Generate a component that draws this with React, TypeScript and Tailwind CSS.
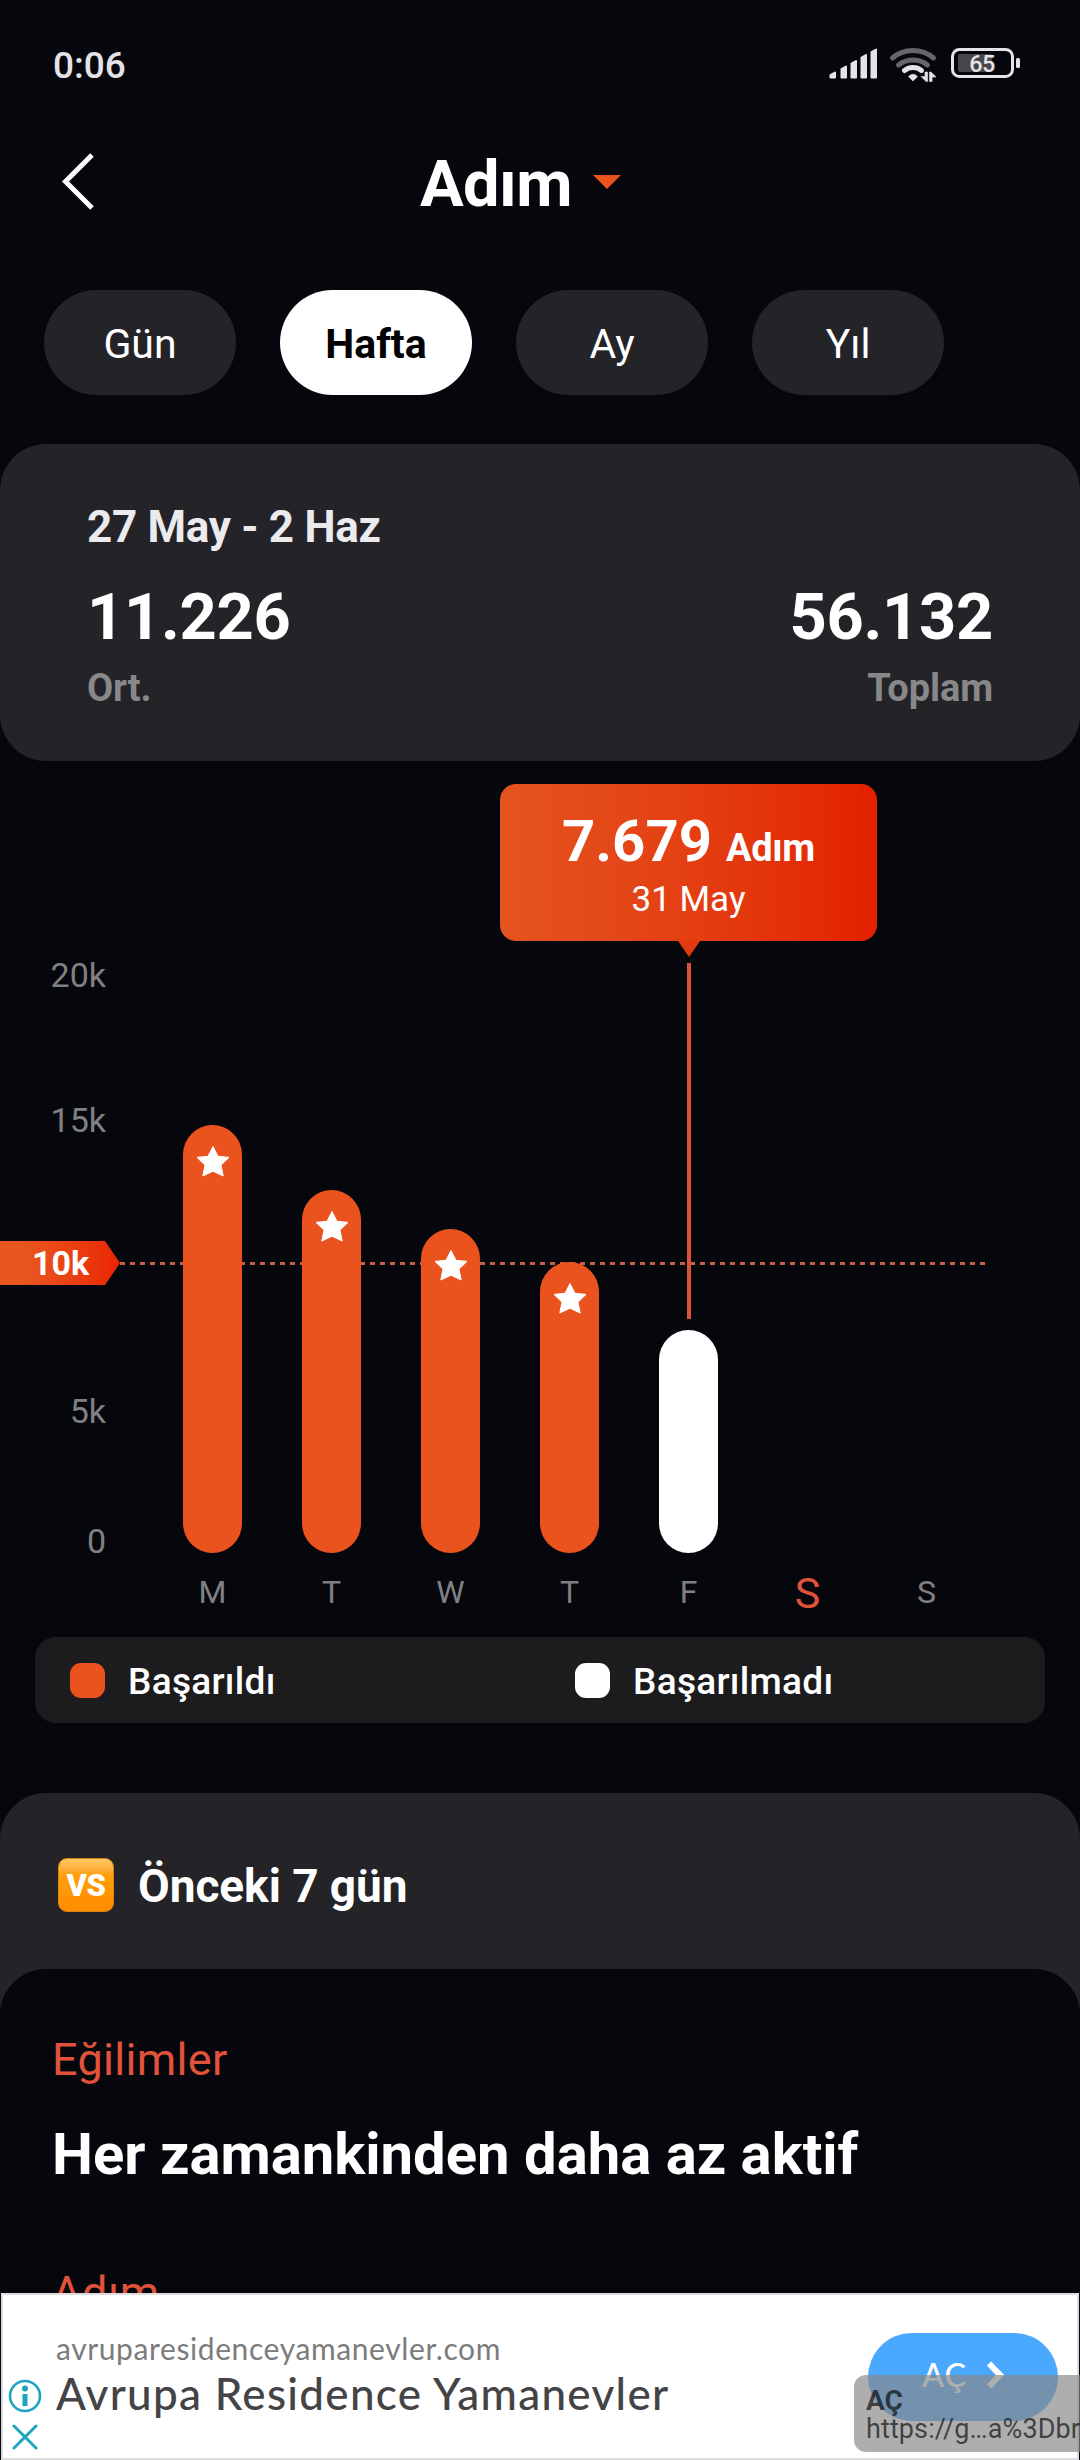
interface Day {
  label: string;
  height: number;
  reached?: boolean;
  today?: boolean;
}

const periods = ['Gün', 'Hafta', 'Ay', 'Yıl'];

const days: Day[] = [
  { label: 'M', height: 428, reached: true },
  { label: 'T', height: 363, reached: true },
  { label: 'W', height: 324, reached: true },
  { label: 'T', height: 291, reached: true },
  { label: 'F', height: 223 },
  { label: 'S', height: 0, today: true },
  { label: 'S', height: 0 },
];

export default function App() {
  return (
    <div className="flex h-[2460px] w-[1080px] flex-col overflow-hidden bg-[#06070c] font-['Roboto',sans-serif] text-white">
      <StatusBar />

      <header className="flex h-[102px] items-center">
        <svg width="40" height="60" viewBox="0 0 40 60" className="ml-[58px]" fill="none" stroke="white" strokeWidth="5">
          <path d="M34 4 7.500 30.500 34 57" />
        </svg>
        <h1 className="ml-[322px] pt-[5px] text-[65px] leading-[76px] font-bold tracking-[-0.6px]">Adım</h1>
        <svg width="28" height="14" viewBox="0 0 28 14" className="ml-[21px] mt-[2px]">
          <path d="M0 0h28L14 14z" fill="#ea531d" />
        </svg>
      </header>

      <nav className="mt-[58px] flex gap-[44px] pl-[44px]">
        {periods.map((p) => (
          <button
            key={p}
            className={
              p === 'Hafta'
                ? 'h-[105px] w-[192px] rounded-full bg-white pt-[5px] text-[41px] font-bold text-black'
                : 'h-[105px] w-[192px] rounded-full bg-[#242328] pt-[5px] text-[41px] text-white'
            }
          >
            {p}
          </button>
        ))}
      </nav>

      <section className="mt-[49px] h-[317px] rounded-[46px] bg-[#242328] px-[87px] pt-[57px]">
        <div className="text-[44px] leading-[52px] font-bold tracking-[-0.3px] text-[#ebebed]">27 May - 2 Haz</div>
        <div className="mt-[28px] flex justify-between">
          <Total value="11.226" label="Ort." />
          <Total value="56.132" label="Toplam" right />
        </div>
      </section>

      <Chart />

      <div className="mx-[35px] flex h-[86px] shrink-0 items-center rounded-[21px] bg-[#1c1c1e] pl-[35px]">
        <div className="flex w-[505px] items-center gap-[23px]">
          <span className="size-[35px] rounded-[11px] bg-[#ea531d]" />
          <span className="pt-[3px] text-[37px] leading-[44px] font-medium tracking-[0.3px]">Başarıldı</span>
        </div>
        <div className="flex items-center gap-[23px]">
          <span className="size-[35px] rounded-[11px] bg-white" />
          <span className="pt-[3px] text-[37px] leading-[44px] font-medium tracking-[0.3px]">Başarılmadı</span>
        </div>
      </div>

      <section className="mt-[70px] flex min-h-0 flex-1 flex-col rounded-t-[46px] bg-[#242328]">
        <div className="flex h-[176px] shrink-0 items-center gap-[24px] pt-[8px] pl-[58px]">
          <span className="flex h-[54px] w-[56px] items-center justify-center rounded-[9px] border border-[#d98310] bg-linear-to-b from-[#ffc865] via-[#ffa00a] via-30% to-[#ff8c00] text-[31px] leading-none font-black tracking-[-0.5px]">
            VS
          </span>
          <span className="pt-[2px] text-[46px] leading-[54px] font-bold tracking-[-0.05px]">Önceki 7 gün</span>
        </div>
        <div className="min-h-0 flex-1 overflow-hidden rounded-t-[46px] bg-[#06070c] px-[52px] pt-[64px]">
          <div className="text-[45px] leading-[54px] tracking-[0.3px] text-[#e1523a]">Eğilimler</div>
          <div className="mt-[32px] text-[58px] leading-[70px] font-bold">Her zamankinden daha az aktif</div>
          <div className="mt-[77px] text-[45px] leading-[54px] tracking-[0.6px] text-[#e1523a]">Adım</div>
        </div>
      </section>

      <AdBanner />
    </div>
  );
}

function StatusBar() {
  return (
    <div className="flex h-[130px] shrink-0 items-center pl-[53px] text-[#e4e4e8]">
      <span className="flex-1 pt-[2px] text-[37px] font-medium">0:06</span>
      <svg width="192" height="40" viewBox="828 46 192 40" className="mr-[60px]" fill="#e4e4e8">
        <g stroke="#e4e4e8" strokeWidth="2" strokeLinejoin="round">
          <path d="M830.500 78.500v-2.500l4.500-2.500v5zM841.500 78.500V70l4.500-2.500v11zM851.500 78.500V64.500l4.500-2.500v16.500zM861.500 78.500V58.500l4.500-2.500v22.500zM871.500 78.500V53l4.500-2.500v28z" />
        </g>
        <g fill="none" strokeWidth="5" strokeLinecap="round">
          <path d="M892.500 59a32 32 0 0 1 41 0" stroke="#66666a" />
          <path d="M898.500 66a23.500 23.500 0 0 1 29 0" stroke="#66666a" />
          <path d="M904.500 71.500a14 14 0 0 1 17 0" stroke="#e4e4e8" />
        </g>
        <path d="M908.500 77.500q4.500-4.500 9 0l-4.500 4.500zM925 73h2.600v9.500h-1.500l-5-5h3.900zM929.500 82.500V73h1.500l5 5h-3.900v4.500z" stroke="#e4e4e8" strokeWidth="0.600" strokeLinejoin="round" />
        <rect x="952.500" y="50.500" width="60" height="27" rx="7" fill="none" stroke="#e4e4e8" strokeWidth="3" />
        <rect x="958" y="55" width="34" height="18" rx="2" fill="#464649" />
        <rect x="1016" y="59" width="4" height="10" rx="1.500" />
        <text x="982" y="73" textAnchor="middle" fontSize="23.500" fontWeight="500" letterSpacing="-0.500">
          65
        </text>
      </svg>
    </div>
  );
}

function Total({ value, label, right }: { value: string; label: string; right?: boolean }) {
  return (
    <div className={right ? 'text-right' : ''}>
      <div className="text-[65px] leading-[72px] font-bold tracking-[-0.3px]">{value}</div>
      <div className="mt-[13px] text-[38px] leading-[44px] font-bold tracking-[-0.1px] text-[#88888b]">{label}</div>
    </div>
  );
}

function Star() {
  return (
    <svg width="34" height="32" viewBox="0 0 34 32" className="mx-auto mt-[20px]" fill="white" stroke="white" strokeLinejoin="round">
      <path d="M17 1.500l5 9.800 11 1.100-8 7.700 2.200 10.900L17 26.200 6.800 31 9 20.100 1 12.400l11-1.100z" />
    </svg>
  );
}

function Chart() {
  return (
    <section className="relative flex h-[876px] shrink-0">
      {/* y axis, the goal tag sits where 10k would be */}
      <div className="flex w-[106px] flex-col pt-[194px] text-right text-[34px] leading-[40px] text-[#808084]">
        <div>20k</div>
        <div className="mt-[105px]">15k</div>
        <div className="mt-[251px]">5k</div>
        <div className="mt-[90px]">0</div>
      </div>

      {/* goal line */}
      <div className="absolute top-[480px] left-0 flex h-[44px] items-center">
        <div className="h-[44px] w-[120px] bg-linear-to-r from-[#e9551f] from-20% to-[#e92302] pt-[2px] pl-[32px] text-[34px] leading-[40px] font-bold [clip-path:polygon(0_0,87.5%_0,100%_50%,87.5%_100%,0_100%)]">
          10k
        </div>
        <div className="h-[3px] w-[865px] bg-[repeating-linear-gradient(to_right,#cb5f43_0_5px,transparent_5px_10px)]" />
      </div>

      <div className="relative ml-[47px] flex">
        {days.map((d, i) => (
          <div key={i} className="flex w-[119px] flex-col items-center">
            <div className="flex h-[792px] items-end">
              <div
                className={d.reached ? 'w-[59px] rounded-full bg-[#ea531d]' : 'w-[59px] rounded-full bg-white'}
                style={{ height: d.height }}
              >
                {d.reached && <Star />}
              </div>
            </div>
            <div
              className={
                d.today
                  ? 'mt-[16px] text-[43px] leading-[48px] text-[#e1523a]'
                  : 'mt-[19px] text-[32px] leading-[40px] text-[#808084]'
              }
            >
              {d.label}
            </div>
          </div>
        ))}
      </div>

      {/* selected day */}
      <div className="absolute top-[23px] left-[500px] flex w-[377px] flex-col items-center">
        <div className="flex h-[157px] w-full flex-col items-center rounded-[16px] bg-linear-to-r from-[#e4541f] to-[#e31f00] pt-[23px]">
          <div className="flex items-baseline gap-[14px] leading-[68px] font-bold">
            <span className="text-[58px]">7.679</span>
            <span className="text-[38px] tracking-[-0.3px]">Adım</span>
          </div>
          <div className="-mt-[2px] text-[35px] leading-[40px]">31 May</div>
        </div>
        <svg width="22" height="16" viewBox="0 0 22 16">
          <path d="M0 0h22L11 16z" fill="#e2390f" />
        </svg>
        <div className="mt-[6px] h-[356px] w-[4px] bg-[#dc5239]" />
      </div>
    </section>
  );
}

function AdBanner() {
  return (
    <aside className="relative mx-px flex h-[167px] shrink-0 border-2 border-[#dcdcde] bg-white font-['Lato',sans-serif]">
      <div className="flex w-[43px] flex-col items-center gap-[11px] pt-[84px]">
        <svg width="34" height="34" viewBox="0 0 34 34" fill="none" stroke="#1da4be">
          <circle cx="17" cy="17" r="15" strokeWidth="2.600" />
          <path d="M17 15v12" strokeWidth="5" />
          <circle cx="17" cy="9.500" r="3" fill="#1da4be" stroke="none" />
        </svg>
        <svg width="26" height="26" viewBox="0 0 26 26" fill="none" stroke="#1da4be" strokeWidth="3" strokeLinecap="round">
          <path d="m2 2 22 22M24 2 2 24" />
        </svg>
      </div>
      <div className="ml-[10px] flex-1 pt-[36px]">
        <div className="text-[30px] leading-[34px] tracking-[0.6px] text-[#7c7c7c]">avruparesidenceyamanevler.com</div>
        <div className="mt-[3px] text-[44px] leading-[50px] font-medium tracking-[1.3px] text-[#444446]">
          Avrupa Residence Yamanevler
        </div>
      </div>
      <button className="mt-[38px] mr-[19px] flex h-[88px] w-[190px] items-center justify-center gap-[19px] rounded-full bg-[#4ba8ff] pb-[4px] text-[32px] font-medium tracking-[1px] text-white">
        AÇ
        <svg width="18" height="28" viewBox="0 0 18 28" fill="none" stroke="white" strokeWidth="6">
          <path d="M3 2.500 14 14 3 25.500" />
        </svg>
      </button>
      {/* link preview */}
      <div className="absolute top-[80px] left-[851px] h-[77px] w-[226px] overflow-hidden rounded-l-[12px] bg-[#888888]/68 pt-[10px] pl-[12px] font-['Roboto',sans-serif] whitespace-nowrap text-black/65">
        <div className="text-[28px] leading-[31px] font-bold">AÇ</div>
        <div className="text-[27px] leading-[27px] tracking-[0.1px]">https://g…a%3Dbr</div>
      </div>
    </aside>
  );
}
